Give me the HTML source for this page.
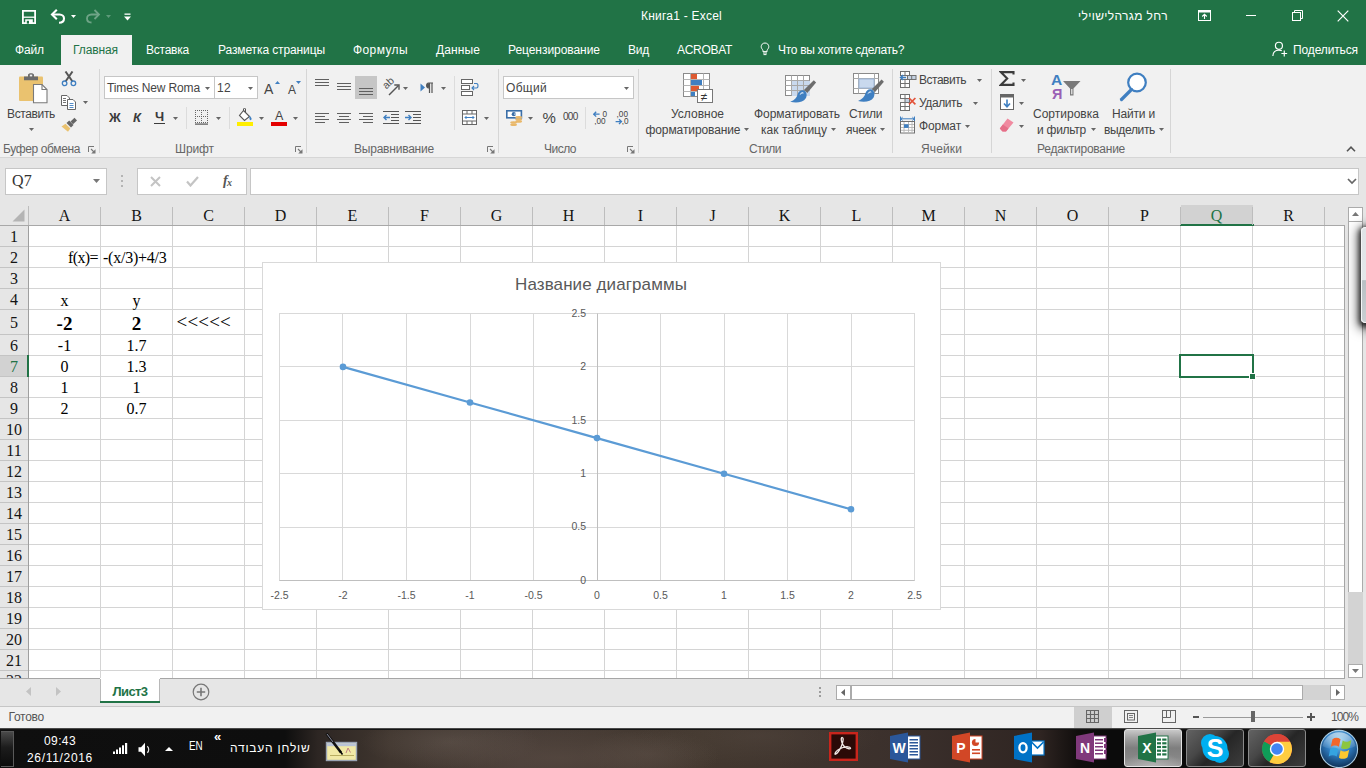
<!DOCTYPE html>
<html lang="ru"><head><meta charset="utf-8"><title>Книга1 - Excel</title>
<style>
html,body{margin:0;padding:0;}
body{width:1366px;height:768px;overflow:hidden;position:relative;background:#fff;font-family:"Liberation Sans","DejaVu Sans",sans-serif;}
.b{position:absolute;display:block;}
.t{position:absolute;white-space:nowrap;}
</style></head><body>
<div class="b" style="left:0px;top:0px;width:1366px;height:65px;background:#217346;"></div>
<div class="b" style="left:0px;top:65px;width:1366px;height:93px;background:#f1f1f1;"></div>
<div class="b" style="left:0px;top:157px;width:1366px;height:1px;background:#d6d6d6;"></div>
<div class="b" style="left:0px;top:158px;width:1366px;height:47px;background:#e6e6e6;"></div>
<svg class="b" style="left:22px;top:10px;" width="14" height="14" viewBox="0 0 14 14"><path d="M0.9 0.9H13.1V13.1H0.9Z" fill="none" stroke="#fff" stroke-width="1.8"/><path d="M1 7.2H13" stroke="#fff" stroke-width="1.3"/><path d="M3.2 9.3H10.8V13.5H3.2Z" fill="#fff"/><rect x="4.8" y="10.8" width="2.2" height="2.8" fill="#217346"/></svg>
<svg class="b" style="left:50px;top:9px;" width="16" height="15" viewBox="0 0 16 15"><path d="M2.5 5.5H9.5C12.5 5.5 14 7.5 14 9.5C14 12 12 13.7 9 13.7" fill="none" stroke="#fff" stroke-width="2.1"/><path d="M6.8 0.8L2 5.5L6.8 10.2" fill="none" stroke="#fff" stroke-width="2.1"/></svg>
<svg class="b" style="left:71.0px;top:15.0px;" width="5" height="3" viewBox="0 0 5 3"><path d="M0 0H5L2.5 3Z" fill="#fff"/></svg>
<svg class="b" style="left:85px;top:9px;" width="16" height="15" viewBox="0 0 16 15"><g opacity="0.35"><path d="M14 5.5H6.5C3.5 5.5 2 7.5 2 9.5C2 12 4 13.5 6.5 13.5" fill="none" stroke="#fff" stroke-width="1.8"/><path d="M9.5 1L14 5.5L9.5 10" fill="none" stroke="#fff" stroke-width="1.8"/></g></svg>
<svg class="b" style="left:106.0px;top:15.0px;" width="5" height="3" viewBox="0 0 5 3"><path d="M0 0H5L2.5 3Z" fill="#5e9a7a"/></svg>
<svg class="b" style="left:124px;top:13px;" width="7" height="8" viewBox="0 0 7 8"><rect x="0.5" y="0.5" width="6" height="1.3" fill="#fff"/><path d="M0 3.5H7L3.5 7.5Z" fill="#fff"/></svg>
<div class="t " style="left:641.0px;top:6.5px;font-size:12px;line-height:18px;color:#fff;letter-spacing:0.23px;">Книга1 - Excel</div>
<div class="t " style="left:1078.0px;top:6.5px;font-size:12px;line-height:18px;color:#fff;letter-spacing:0.36px;">רחל מגרהלישוילי</div>
<svg class="b" style="left:1198px;top:10px;" width="13" height="11" viewBox="0 0 13 11"><rect x="0.5" y="0.5" width="12" height="10" fill="none" stroke="#fff"/><rect x="0.5" y="0.5" width="12" height="2" fill="#fff"/><path d="M6.5 4.5V9M4.2 6.5L6.5 4.3L8.8 6.5" fill="none" stroke="#fff" stroke-width="1.1"/></svg>
<div class="b" style="left:1246px;top:15px;width:10px;height:1px;background:#fff;"></div>
<svg class="b" style="left:1292px;top:10px;" width="11" height="11" viewBox="0 0 11 11"><rect x="0.5" y="2.5" width="8" height="8" fill="none" stroke="#fff"/><path d="M2.5 2.5V0.5H10.5V8.5H8.5" fill="none" stroke="#fff"/></svg>
<svg class="b" style="left:1337px;top:10px;" width="12" height="12" viewBox="0 0 12 12"><path d="M0.7 0.7L11.3 11.3M11.3 0.7L0.7 11.3" stroke="#fff" stroke-width="1.2"/></svg>
<div class="b" style="left:61px;top:35px;width:71px;height:30px;background:#f1f1f1;"></div>
<div class="t " style="left:15.0px;top:40.5px;font-size:12px;line-height:18px;color:#fff;letter-spacing:-0.13px;">Файл</div>
<div class="t " style="left:146.0px;top:40.5px;font-size:12px;line-height:18px;color:#fff;letter-spacing:-0.23px;">Вставка</div>
<div class="t " style="left:218.0px;top:40.5px;font-size:12px;line-height:18px;color:#fff;letter-spacing:-0.11px;">Разметка страницы</div>
<div class="t " style="left:353.0px;top:40.5px;font-size:12px;line-height:18px;color:#fff;letter-spacing:0.40px;">Формулы</div>
<div class="t " style="left:436.0px;top:40.5px;font-size:12px;line-height:18px;color:#fff;letter-spacing:0.11px;">Данные</div>
<div class="t " style="left:508.0px;top:40.5px;font-size:12px;line-height:18px;color:#fff;letter-spacing:-0.05px;">Рецензирование</div>
<div class="t " style="left:628.0px;top:40.5px;font-size:12px;line-height:18px;color:#fff;letter-spacing:-0.24px;">Вид</div>
<div class="t " style="left:677.0px;top:40.5px;font-size:12px;line-height:18px;color:#fff;letter-spacing:-0.30px;">ACROBAT</div>
<div class="t " style="left:778.0px;top:40.5px;font-size:12px;line-height:18px;color:#fff;letter-spacing:-0.30px;">Что вы хотите сделать?</div>
<div class="t " style="left:1293.0px;top:40.5px;font-size:12px;line-height:18px;color:#fff;letter-spacing:-0.13px;">Поделиться</div>
<div class="t " style="left:73.0px;top:40.5px;font-size:12px;line-height:18px;color:#217346;letter-spacing:-0.10px;">Главная</div>
<svg class="b" style="left:760px;top:42px;" width="10" height="14" viewBox="0 0 10 14"><path d="M5 1C2.6 1 1.2 2.8 1.2 4.7C1.2 6.3 2.3 7.1 2.9 8.2V9.6H7.1V8.2C7.7 7.1 8.8 6.3 8.8 4.7C8.8 2.8 7.4 1 5 1Z" fill="none" stroke="#fff" stroke-width="1"/><path d="M3 11H7M3.5 12.6H6.5" stroke="#fff" stroke-width="1"/></svg>
<svg class="b" style="left:1271.5px;top:41px;" width="16" height="16" viewBox="0 0 15 15"><circle cx="6.5" cy="4.5" r="3.3" fill="none" stroke="#fff" stroke-width="1.1"/><path d="M0.8 14C0.8 10.5 3 8.6 6.5 8.6C7.6 8.6 8.5 8.8 9.2 9.1" fill="none" stroke="#fff" stroke-width="1.1"/><path d="M11.5 9V14.5M8.8 11.7H14.2" stroke="#fff" stroke-width="1.1"/></svg>
<div class="t " style="left:3.0px;top:140.0px;font-size:12px;line-height:18px;color:#666666;letter-spacing:-0.38px;">Буфер обмена</div>
<div class="t " style="left:175.0px;top:140.0px;font-size:12px;line-height:18px;color:#666666;letter-spacing:-0.10px;">Шрифт</div>
<div class="t " style="left:354.0px;top:140.0px;font-size:12px;line-height:18px;color:#666666;letter-spacing:-0.22px;">Выравнивание</div>
<div class="t " style="left:544.0px;top:140.0px;font-size:12px;line-height:18px;color:#666666;letter-spacing:-0.50px;">Число</div>
<div class="t " style="left:749.0px;top:140.0px;font-size:12px;line-height:18px;color:#666666;letter-spacing:-0.51px;">Стили</div>
<div class="t " style="left:921.0px;top:140.0px;font-size:12px;line-height:18px;color:#666666;letter-spacing:0.13px;">Ячейки</div>
<div class="t " style="left:1037.0px;top:140.0px;font-size:12px;line-height:18px;color:#666666;letter-spacing:-0.24px;">Редактирование</div>
<div class="b" style="left:99px;top:69px;width:1px;height:84px;background:#d6d6d6;"></div>
<div class="b" style="left:306px;top:69px;width:1px;height:84px;background:#d6d6d6;"></div>
<div class="b" style="left:498px;top:69px;width:1px;height:84px;background:#d6d6d6;"></div>
<div class="b" style="left:638px;top:69px;width:1px;height:84px;background:#d6d6d6;"></div>
<div class="b" style="left:892px;top:69px;width:1px;height:84px;background:#d6d6d6;"></div>
<div class="b" style="left:991px;top:69px;width:1px;height:84px;background:#d6d6d6;"></div>
<div class="b" style="left:1170px;top:69px;width:1px;height:84px;background:#d6d6d6;"></div>
<svg class="b" style="left:88px;top:146px;" width="8" height="8" viewBox="0 0 8 8"><path d="M0.5 6V0.5H6" fill="none" stroke="#777"/><path d="M7.5 3.2V7.5H3.2Z" fill="#777"/><path d="M3 3L6 6" stroke="#777" stroke-width="1.1"/></svg>
<svg class="b" style="left:295px;top:146px;" width="8" height="8" viewBox="0 0 8 8"><path d="M0.5 6V0.5H6" fill="none" stroke="#777"/><path d="M7.5 3.2V7.5H3.2Z" fill="#777"/><path d="M3 3L6 6" stroke="#777" stroke-width="1.1"/></svg>
<svg class="b" style="left:487px;top:146px;" width="8" height="8" viewBox="0 0 8 8"><path d="M0.5 6V0.5H6" fill="none" stroke="#777"/><path d="M7.5 3.2V7.5H3.2Z" fill="#777"/><path d="M3 3L6 6" stroke="#777" stroke-width="1.1"/></svg>
<svg class="b" style="left:627px;top:146px;" width="8" height="8" viewBox="0 0 8 8"><path d="M0.5 6V0.5H6" fill="none" stroke="#777"/><path d="M7.5 3.2V7.5H3.2Z" fill="#777"/><path d="M3 3L6 6" stroke="#777" stroke-width="1.1"/></svg>
<svg class="b" style="left:1346px;top:146px;" width="10" height="6" viewBox="0 0 10 6"><path d="M1 5.2L5 1.2L9 5.2" fill="none" stroke="#555" stroke-width="1.6"/></svg>
<svg class="b" style="left:19px;top:73px;" width="29" height="31" viewBox="0 0 29 31"><rect x="0" y="3.5" width="24" height="24.5" rx="1" fill="#eac26f"/><path d="M5 7.2V3.6H9V1.8C9 -0.4 15 -0.4 15 1.8V3.6H19V7.2Z" fill="#6b6b6b"/><rect x="10.8" y="1.6" width="2.4" height="1.8" fill="#f1f1f1"/><path d="M14.5 11.5H23L28 16.5V29.8H14.5Z" fill="#fff" stroke="#7a7a7a" stroke-width="1.1"/><path d="M23 11.5V16.5H28" fill="none" stroke="#7a7a7a" stroke-width="1.1"/></svg>
<div class="t " style="left:7.0px;top:105.0px;font-size:12px;line-height:18px;color:#444444;letter-spacing:-0.36px;">Вставить</div>
<svg class="b" style="left:29.0px;top:127.5px;" width="5" height="3" viewBox="0 0 5 3"><path d="M0 0H5L2.5 3Z" fill="#666"/></svg>
<svg class="b" style="left:61px;top:71px;" width="16" height="16" viewBox="0 0 16 16"><path d="M4.5 0.5L11.5 10.5M11.5 0.5L4.5 10.5" stroke="#555" stroke-width="2" fill="none"/><circle cx="3.6" cy="12.3" r="2.3" fill="none" stroke="#3f7fc1" stroke-width="1.3"/><circle cx="12.4" cy="12.3" r="2.3" fill="none" stroke="#3f7fc1" stroke-width="1.3"/></svg>
<svg class="b" style="left:61px;top:95px;" width="16" height="16" viewBox="0 0 16 16"><path d="M0.5 0.5H6L8.5 3V10.5H0.5Z" fill="#fff" stroke="#666"/><path d="M6.5 4.5H12L14.5 7V14.5H6.5Z" fill="#fff" stroke="#666"/><path d="M2 3.5H5M2 5.5H5M2 7.5H5" stroke="#666" stroke-width="0.9"/><path d="M8.5 8.5H12.5M8.5 10.5H12.5M8.5 12.5H12.5" stroke="#3f7fc1" stroke-width="0.9"/></svg>
<svg class="b" style="left:83.0px;top:101.0px;" width="5" height="3" viewBox="0 0 5 3"><path d="M0 0H5L2.5 3Z" fill="#666"/></svg>
<svg class="b" style="left:61px;top:117px;" width="17" height="16" viewBox="0 0 17 16"><path d="M9.5 4.5L13.5 0.8L16 3.4L12 7.2Z" fill="#666"/><path d="M5.5 6L8.2 3.6L12.5 8L10 10.4Z" fill="#666"/><path d="M4.5 6.8L9.3 11.6L7 14.8L0.5 9.5Z" fill="#eac26f"/></svg>
<div class="b" style="left:104px;top:76px;width:111px;height:23px;background:#fff;border:1px solid #c6c6c6;box-sizing:border-box;"></div>
<div class="t " style="left:107.0px;top:79.0px;font-size:12px;line-height:18px;color:#444444;letter-spacing:-0.14px;">Times New Roma</div>
<svg class="b" style="left:205.0px;top:86.5px;" width="5" height="3" viewBox="0 0 5 3"><path d="M0 0H5L2.5 3Z" fill="#666"/></svg>
<div class="b" style="left:214px;top:76px;width:44px;height:23px;background:#fff;border:1px solid #c6c6c6;box-sizing:border-box;"></div>
<div class="t " style="left:217.0px;top:79.0px;font-size:12px;line-height:18px;color:#444444;letter-spacing:0.33px;">12</div>
<svg class="b" style="left:248.0px;top:86.5px;" width="5" height="3" viewBox="0 0 5 3"><path d="M0 0H5L2.5 3Z" fill="#666"/></svg>
<div class="t " style="left:264.0px;top:78.5px;font-size:14px;line-height:20px;color:#444444;letter-spacing:0.66px;">A</div>
<svg class="b" style="left:274.5px;top:80.5px;" width="5" height="3" viewBox="0 0 5 3"><path d="M0 3L2.5 0L5 3Z" fill="#3f7fc1"/></svg>
<div class="t " style="left:288.0px;top:80.5px;font-size:12px;line-height:18px;color:#444444;letter-spacing:-0.00px;">A</div>
<svg class="b" style="left:295.5px;top:80.5px;" width="5" height="3" viewBox="0 0 5 3"><path d="M0 0H5L2.5 3Z" fill="#3f7fc1"/></svg>
<div class="t " style="left:109.0px;top:107.5px;font-size:13px;line-height:19px;color:#3b3b3b;letter-spacing:0.25px;font-weight:bold;">Ж</div>
<div class="t " style="left:133.0px;top:107.5px;font-size:13px;line-height:19px;color:#3b3b3b;letter-spacing:0.01px;font-weight:bold;font-style:italic;">К</div>
<div class="t " style="left:155.0px;top:107.0px;font-size:13px;line-height:19px;color:#3b3b3b;letter-spacing:-0.13px;font-weight:bold;">Ч</div>
<div class="b" style="left:154px;top:123px;width:11px;height:1px;background:#3b3b3b;"></div>
<svg class="b" style="left:173.0px;top:116.5px;" width="5" height="3" viewBox="0 0 5 3"><path d="M0 0H5L2.5 3Z" fill="#666"/></svg>
<div class="b" style="left:186px;top:107px;width:1px;height:22px;background:#dcdcdc;"></div>
<svg class="b" style="left:195px;top:110px;" width="13" height="15" viewBox="0 0 13 15"><rect x="0" y="0" width="1" height="1" fill="#666"/><rect x="2" y="0" width="1" height="1" fill="#666"/><rect x="4" y="0" width="1" height="1" fill="#666"/><rect x="6" y="0" width="1" height="1" fill="#666"/><rect x="8" y="0" width="1" height="1" fill="#666"/><rect x="10" y="0" width="1" height="1" fill="#666"/><rect x="12" y="0" width="1" height="1" fill="#666"/><rect x="0" y="6" width="1" height="1" fill="#666"/><rect x="2" y="6" width="1" height="1" fill="#666"/><rect x="4" y="6" width="1" height="1" fill="#666"/><rect x="6" y="6" width="1" height="1" fill="#666"/><rect x="8" y="6" width="1" height="1" fill="#666"/><rect x="10" y="6" width="1" height="1" fill="#666"/><rect x="12" y="6" width="1" height="1" fill="#666"/><rect x="0" y="12" width="1" height="1" fill="#666"/><rect x="2" y="12" width="1" height="1" fill="#666"/><rect x="4" y="12" width="1" height="1" fill="#666"/><rect x="6" y="12" width="1" height="1" fill="#666"/><rect x="8" y="12" width="1" height="1" fill="#666"/><rect x="10" y="12" width="1" height="1" fill="#666"/><rect x="12" y="12" width="1" height="1" fill="#666"/><rect x="0" y="0" width="1" height="1" fill="#666"/><rect x="0" y="2" width="1" height="1" fill="#666"/><rect x="0" y="4" width="1" height="1" fill="#666"/><rect x="0" y="6" width="1" height="1" fill="#666"/><rect x="0" y="8" width="1" height="1" fill="#666"/><rect x="0" y="10" width="1" height="1" fill="#666"/><rect x="0" y="12" width="1" height="1" fill="#666"/><rect x="6" y="0" width="1" height="1" fill="#666"/><rect x="6" y="2" width="1" height="1" fill="#666"/><rect x="6" y="4" width="1" height="1" fill="#666"/><rect x="6" y="6" width="1" height="1" fill="#666"/><rect x="6" y="8" width="1" height="1" fill="#666"/><rect x="6" y="10" width="1" height="1" fill="#666"/><rect x="6" y="12" width="1" height="1" fill="#666"/><rect x="12" y="0" width="1" height="1" fill="#666"/><rect x="12" y="2" width="1" height="1" fill="#666"/><rect x="12" y="4" width="1" height="1" fill="#666"/><rect x="12" y="6" width="1" height="1" fill="#666"/><rect x="12" y="8" width="1" height="1" fill="#666"/><rect x="12" y="10" width="1" height="1" fill="#666"/><rect x="12" y="12" width="1" height="1" fill="#666"/><rect x="0" y="13.5" width="13" height="1.2" fill="#555"/></svg>
<svg class="b" style="left:216.0px;top:116.5px;" width="5" height="3" viewBox="0 0 5 3"><path d="M0 0H5L2.5 3Z" fill="#666"/></svg>
<div class="b" style="left:229px;top:107px;width:1px;height:22px;background:#dcdcdc;"></div>
<svg class="b" style="left:237px;top:108px;" width="17" height="18" viewBox="0 0 17 18"><path d="M6.5 2.5L12.5 8.5L7.5 12.5L2.5 7.5Z" fill="#fff" stroke="#555" stroke-width="1.1"/><path d="M6.5 2.5V0.8C6.5 0.2 8.5 0.2 8.5 0.8V4" fill="none" stroke="#555" stroke-width="1"/><path d="M12.5 7.5C14.5 9.5 15.3 11 14 12C12.8 12.8 12 11 12.5 7.5Z" fill="#3f7fc1"/><rect x="0" y="14" width="16" height="4" fill="#ffee00"/></svg>
<svg class="b" style="left:259.0px;top:116.5px;" width="5" height="3" viewBox="0 0 5 3"><path d="M0 0H5L2.5 3Z" fill="#666"/></svg>
<div class="t " style="left:275.0px;top:107.2px;font-size:12.5px;line-height:18.5px;color:#444;letter-spacing:0.66px;">A</div>
<div class="b" style="left:271px;top:122px;width:16px;height:4px;background:#e40000;"></div>
<svg class="b" style="left:293.0px;top:116.5px;" width="5" height="3" viewBox="0 0 5 3"><path d="M0 0H5L2.5 3Z" fill="#666"/></svg>
<div class="b" style="left:355px;top:76px;width:22px;height:23px;background:#c6c6c6;"></div>
<svg class="b" style="left:315px;top:79px;" width="14" height="9" viewBox="0 0 14 9"><rect x="0" y="0" width="14" height="1" fill="#606060"/><rect x="0" y="3" width="14" height="1" fill="#606060"/><rect x="0" y="6" width="14" height="1" fill="#606060"/></svg>
<svg class="b" style="left:337px;top:83px;" width="14" height="9" viewBox="0 0 14 9"><rect x="0" y="0" width="14" height="1" fill="#606060"/><rect x="0" y="3" width="14" height="1" fill="#606060"/><rect x="0" y="6" width="14" height="1" fill="#606060"/></svg>
<svg class="b" style="left:359px;top:88px;" width="14" height="9" viewBox="0 0 14 9"><rect x="0" y="0" width="14" height="1" fill="#606060"/><rect x="0" y="3" width="14" height="1" fill="#606060"/><rect x="0" y="6" width="14" height="1" fill="#606060"/></svg>
<svg class="b" style="left:383px;top:78px;" width="19" height="19" viewBox="0 0 19 19"><path d="M6 17L15.5 7.5" stroke="#555" stroke-width="1.4"/><path d="M11.3 7H16V11.7" fill="none" stroke="#555" stroke-width="1.4"/><text transform="translate(3.2 11.5) rotate(-42)" font-size="10.5" fill="#555" font-family="Liberation Sans,sans-serif">ab</text></svg>
<svg class="b" style="left:403.0px;top:86.5px;" width="5" height="3" viewBox="0 0 5 3"><path d="M0 0H5L2.5 3Z" fill="#666"/></svg>
<svg class="b" style="left:420px;top:82px;" width="14" height="12" viewBox="0 0 14 12"><path d="M0.5 1.5L5 5.5L0.5 9.5Z" fill="#3f7fc1"/><path d="M9.5 1V11M12 1V11M13 1H8.5C6 1 6 6 8.5 6H9.5" fill="none" stroke="#555" stroke-width="1.2"/><path d="M9.3 1.2H7.8C6.3 1.8 6.3 5.2 7.8 5.8H9.3Z" fill="#555"/></svg>
<svg class="b" style="left:441.0px;top:86.5px;" width="5" height="3" viewBox="0 0 5 3"><path d="M0 0H5L2.5 3Z" fill="#666"/></svg>
<div class="b" style="left:454px;top:76px;width:1px;height:54px;background:#dcdcdc;"></div>
<svg class="b" style="left:461px;top:79px;" width="19" height="17" viewBox="0 0 19 17"><rect x="0.5" y="0.5" width="11" height="4" fill="#fff" stroke="#666"/><rect x="0.5" y="6.5" width="8" height="4" fill="#fff" stroke="#666"/><rect x="0.5" y="12.5" width="11" height="4" fill="#fff" stroke="#666"/><path d="M13 4.5H15.5C17.5 4.5 17.5 9 15.5 9H11M13 7L11 9L13 11" fill="none" stroke="#3f7fc1" stroke-width="1.1"/></svg>
<svg class="b" style="left:315px;top:113px;" width="14" height="12" viewBox="0 0 14 12"><rect x="0" y="0" width="14" height="1" fill="#606060"/><rect x="0" y="3" width="10" height="1" fill="#606060"/><rect x="0" y="6" width="14" height="1" fill="#606060"/><rect x="0" y="9" width="10" height="1" fill="#606060"/></svg>
<svg class="b" style="left:337px;top:113px;" width="14" height="12" viewBox="0 0 14 12"><rect x="0.0" y="0" width="14" height="1" fill="#606060"/><rect x="2.0" y="3" width="10" height="1" fill="#606060"/><rect x="0.0" y="6" width="14" height="1" fill="#606060"/><rect x="2.0" y="9" width="10" height="1" fill="#606060"/></svg>
<svg class="b" style="left:359px;top:113px;" width="14" height="12" viewBox="0 0 14 12"><rect x="0" y="0" width="14" height="1" fill="#606060"/><rect x="4" y="3" width="10" height="1" fill="#606060"/><rect x="0" y="6" width="14" height="1" fill="#606060"/><rect x="4" y="9" width="10" height="1" fill="#606060"/></svg>
<svg class="b" style="left:383px;top:111px;" width="16" height="14" viewBox="0 0 16 14"><path d="M0 0.5H16M8 3.5H16M8 6.5H16M8 9.5H16M0 12.5H16" stroke="#555"/><path d="M7 6.5H1M3.5 4L1 6.5L3.5 9" fill="none" stroke="#3f7fc1" stroke-width="1.4"/></svg>
<svg class="b" style="left:405px;top:111px;" width="16" height="14" viewBox="0 0 16 14"><path d="M0 0.5H16M8 3.5H16M8 6.5H16M8 9.5H16M0 12.5H16" stroke="#555"/><path d="M0 6.5H6M3.5 4L6 6.5L3.5 9" fill="none" stroke="#3f7fc1" stroke-width="1.4"/></svg>
<svg class="b" style="left:462px;top:110px;" width="15" height="15" viewBox="0 0 15 15"><rect x="0.5" y="0.5" width="14" height="14" fill="#fff" stroke="#666"/><path d="M0.5 4H14.5M0.5 11H14.5M5 0.5V4M10 0.5V4M5 11V14.5M10 11V14.5" stroke="#666"/><path d="M3 7.5H12M4.5 6L3 7.5L4.5 9M10.5 6L12 7.5L10.5 9" fill="none" stroke="#3f7fc1" stroke-width="1"/></svg>
<svg class="b" style="left:484.0px;top:116.5px;" width="5" height="3" viewBox="0 0 5 3"><path d="M0 0H5L2.5 3Z" fill="#666"/></svg>
<div class="b" style="left:503px;top:76px;width:131px;height:23px;background:#fff;border:1px solid #c6c6c6;box-sizing:border-box;"></div>
<div class="t " style="left:506.0px;top:79.0px;font-size:12px;line-height:18px;color:#444444;letter-spacing:0.30px;">Общий</div>
<svg class="b" style="left:624.0px;top:86.5px;" width="5" height="3" viewBox="0 0 5 3"><path d="M0 0H5L2.5 3Z" fill="#666"/></svg>
<svg class="b" style="left:506px;top:110px;" width="17" height="17" viewBox="0 0 17 17"><rect x="0.8" y="0.8" width="14.6" height="7" fill="#fff" stroke="#3b6fa8" stroke-width="1.6"/><circle cx="7.8" cy="4.2" r="2.1" fill="#3b6fa8"/><rect x="8.2" y="3.6" width="1.6" height="1" fill="#fff"/><ellipse cx="12.7" cy="7.2" rx="3.4" ry="1.25" fill="#e9b86a"/><ellipse cx="12.7" cy="9.4" rx="3.4" ry="1.25" fill="#e9b86a"/><ellipse cx="12.7" cy="11.4" rx="3.4" ry="1.25" fill="#e9b86a"/><ellipse cx="7.6" cy="12.6" rx="3.4" ry="1.25" fill="#e9b86a"/><ellipse cx="7.6" cy="14.8" rx="3.4" ry="1.25" fill="#e9b86a"/></svg>
<svg class="b" style="left:528.0px;top:116.5px;" width="5" height="3" viewBox="0 0 5 3"><path d="M0 0H5L2.5 3Z" fill="#666"/></svg>
<div class="t " style="left:542.5px;top:106.5px;font-size:15px;line-height:21px;color:#444;letter-spacing:-0.84px;">%</div>
<div class="t " style="left:563.0px;top:109.3px;font-size:10px;line-height:16px;color:#444;letter-spacing:-0.73px;">000</div>
<div class="b" style="left:585px;top:107px;width:1px;height:22px;background:#dcdcdc;"></div>
<svg class="b" style="left:593px;top:110px;" width="15" height="15" viewBox="0 0 15 15"><path d="M6.6 4.2H0.8M3.2 1.8L0.7 4.2L3.2 6.6" fill="none" stroke="#3f7fc1" stroke-width="1.3"/><text x="9.6" y="7" font-family="Liberation Sans,sans-serif" font-size="8.2" fill="#444">0</text><text x="1.2" y="13.6" font-family="Liberation Sans,sans-serif" font-size="8.2" fill="#444">,00</text></svg>
<svg class="b" style="left:615px;top:110px;" width="15" height="15" viewBox="0 0 15 15"><text x="1.6" y="7" font-family="Liberation Sans,sans-serif" font-size="8.2" fill="#444">,00</text><path d="M0.6 11.6H6.4M4 9.2L6.5 11.6L4 14" fill="none" stroke="#3f7fc1" stroke-width="1.3"/><text x="6.8" y="13.6" font-family="Liberation Sans,sans-serif" font-size="8.2" fill="#444">,0</text></svg>
<svg class="b" style="left:683px;top:73px;" width="31" height="31" viewBox="0 0 31 31"><rect x="0.5" y="0.5" width="26" height="23" fill="#fff" stroke="#8a8a8a"/><path d="M0.5 6.5H26.5M0.5 12.5H26.5M0.5 18.5H26.5M7.5 0.5V23.5M20.5 0.5V23.5" stroke="#b5b5b5"/><rect x="8" y="1" width="6" height="5" fill="#dd5a32"/><rect x="8" y="7" width="11" height="5" fill="#3f7fc1"/><rect x="8" y="13" width="8" height="5" fill="#dd5a32"/><rect x="8" y="19" width="4" height="4" fill="#3f7fc1"/><rect x="14.5" y="16.5" width="15" height="13" fill="#fff" stroke="#777"/><text x="17.8" y="27.5" font-size="12" fill="#333" font-family="Liberation Sans,sans-serif">≠</text></svg>
<div class="t " style="left:671.0px;top:105.0px;font-size:12px;line-height:18px;color:#444444;letter-spacing:0.00px;">Условное</div>
<div class="t " style="left:645.5px;top:121.0px;font-size:12px;line-height:18px;color:#444444;letter-spacing:-0.10px;">форматирование</div>
<svg class="b" style="left:744.0px;top:128.0px;" width="5" height="3" viewBox="0 0 5 3"><path d="M0 0H5L2.5 3Z" fill="#666"/></svg>
<svg class="b" style="left:785px;top:74px;" width="33" height="31" viewBox="0 0 33 31"><rect x="0.5" y="1.5" width="24" height="20" fill="#fff" stroke="#8a8a8a"/><rect x="7" y="7" width="18" height="15" fill="#c9d9ee"/><path d="M0.5 6.5H24.5M0.5 11.5H24.5M0.5 16.5H24.5M6.5 1.5V21.5M12.5 1.5V21.5M18.5 1.5V21.5" stroke="#a8a8a8"/><path d="M28.8 6.2l2.3 2.3l-8.8 10.4l-3.4 -2.9Z" fill="#6d6d6d"/><path d="M19.2 16.4c-3.5 -1 -5.8 1 -6.6 4c-0.9 3 -3 5.6 -7.4 7.4c6 1.6 13 0.8 15.6 -3.6c1.6 -3 1 -6.2 -1.6 -7.8Z" fill="#3f7fc1"/><path d="M18.0 18.0c-2 0.2 -3 1.6 -3.4 3.2c1.4 -1.4 2.6 -1.8 4.2 -1.8Z" fill="#cfe0f3"/></svg>
<div class="t " style="left:754.0px;top:105.0px;font-size:12px;line-height:18px;color:#444444;letter-spacing:-0.08px;">Форматировать</div>
<div class="t " style="left:761.0px;top:121.0px;font-size:12px;line-height:18px;color:#444444;letter-spacing:0.03px;">как таблицу</div>
<svg class="b" style="left:831.0px;top:128.0px;" width="5" height="3" viewBox="0 0 5 3"><path d="M0 0H5L2.5 3Z" fill="#666"/></svg>
<svg class="b" style="left:852px;top:73px;" width="33" height="31" viewBox="0 0 33 31"><rect x="1.5" y="0.5" width="25" height="20" fill="#fff" stroke="#8a8a8a"/><path d="M1.5 5.5H26.5M1.5 15.5H26.5M6.5 0.5V20.5M22.5 0.5V20.5" stroke="#a8a8a8"/><rect x="7" y="6" width="15" height="9" fill="#c9d9ee" stroke="#9db7da"/><path d="M29.6 6.4l2.3 2.3l-8.8 10.4l-3.4 -2.9Z" fill="#6d6d6d"/><path d="M20.0 16.6c-3.5 -1 -5.8 1 -6.6 4c-0.9 3 -3 5.6 -7.4 7.4c6 1.6 13 0.8 15.6 -3.6c1.6 -3 1 -6.2 -1.6 -7.8Z" fill="#3f7fc1"/><path d="M18.8 18.2c-2 0.2 -3 1.6 -3.4 3.2c1.4 -1.4 2.6 -1.8 4.2 -1.8Z" fill="#cfe0f3"/></svg>
<div class="t " style="left:849.0px;top:105.0px;font-size:12px;line-height:18px;color:#444444;letter-spacing:-0.31px;">Стили</div>
<div class="t " style="left:846.0px;top:121.0px;font-size:12px;line-height:18px;color:#444444;letter-spacing:-0.27px;">ячеек</div>
<svg class="b" style="left:880.0px;top:128.0px;" width="5" height="3" viewBox="0 0 5 3"><path d="M0 0H5L2.5 3Z" fill="#666"/></svg>
<svg class="b" style="left:899px;top:70px;" width="19" height="19" viewBox="0 0 19 19"><g fill="#fff" stroke="#707070"><rect x="1.5" y="1.5" width="9" height="4"/><rect x="1.5" y="9.5" width="9" height="4"/><rect x="1.5" y="13.5" width="9" height="4"/><rect x="8.5" y="5.5" width="8.5" height="4" fill="#c5d2e2"/><path d="M6 1.5V5.5M6 9.5V17.5M12.7 5.5V9.5"/></g><path d="M7 7.5H1.8M4.2 5L1.6 7.5L4.2 10" fill="none" stroke="#3f7fc1" stroke-width="1.5"/></svg>
<div class="t " style="left:919.0px;top:71.0px;font-size:12px;line-height:18px;color:#444444;letter-spacing:-0.48px;">Вставить</div>
<svg class="b" style="left:977.0px;top:78.5px;" width="5" height="3" viewBox="0 0 5 3"><path d="M0 0H5L2.5 3Z" fill="#666"/></svg>
<svg class="b" style="left:899px;top:93px;" width="19" height="19" viewBox="0 0 19 19"><g fill="#fff" stroke="#707070"><rect x="1.5" y="1.5" width="9" height="4"/><rect x="1.5" y="9.5" width="9" height="4"/><rect x="1.5" y="13.5" width="9" height="4"/><rect x="6" y="5.5" width="4.5" height="4" fill="#c5d2e2"/><path d="M6 1.5V5.5M6 9.5V17.5"/></g><path d="M10 5L16.4 11.4M16.4 5L10 11.4" stroke="#e2533a" stroke-width="1.7"/></svg>
<div class="t " style="left:919.0px;top:94.0px;font-size:12px;line-height:18px;color:#444444;letter-spacing:-0.40px;">Удалить</div>
<svg class="b" style="left:973.0px;top:101.5px;" width="5" height="3" viewBox="0 0 5 3"><path d="M0 0H5L2.5 3Z" fill="#666"/></svg>
<svg class="b" style="left:899px;top:116px;" width="19" height="19" viewBox="0 0 19 19"><path d="M1.5 2.8H15M1.5 0.5V5M15.5 0.5V5M3.6 1.2L1.8 2.8L3.6 4.4M13.4 1.2L15.2 2.8L13.4 4.4" fill="none" stroke="#3f7fc1" stroke-width="1"/><rect x="1.5" y="5.5" width="14" height="11.5" fill="#fff" stroke="#707070"/><path d="M2 8.5H15M2 11.5H15M2 14.3H15M5 6V16.5M9.5 6V16.5M13 6V16.5" stroke="#b4b4b4" stroke-width="0.9"/><rect x="5" y="8.3" width="4.6" height="3.6" fill="#3f7fc1"/></svg>
<div class="t " style="left:919.0px;top:117.0px;font-size:12px;line-height:18px;color:#444444;letter-spacing:-0.10px;">Формат</div>
<svg class="b" style="left:965.0px;top:124.5px;" width="5" height="3" viewBox="0 0 5 3"><path d="M0 0H5L2.5 3Z" fill="#666"/></svg>
<svg class="b" style="left:999px;top:71px;" width="16" height="15" viewBox="0 0 16 15"><path d="M14.5 3.5V1.1H1.8L8.2 7.5L1.8 13.9H14.5V11.5" fill="none" stroke="#3c3c3c" stroke-width="2.1"/></svg>
<svg class="b" style="left:1021.0px;top:78.5px;" width="5" height="3" viewBox="0 0 5 3"><path d="M0 0H5L2.5 3Z" fill="#666"/></svg>
<svg class="b" style="left:1000px;top:94px;" width="15" height="16" viewBox="0 0 15 16"><rect x="0.5" y="0.5" width="13" height="15" fill="#fff" stroke="#666"/><rect x="0.5" y="0.5" width="13" height="3" fill="#666"/><path d="M7 5.5V12.5M4 9.5L7 12.8L10 9.5" fill="none" stroke="#3f7fc1" stroke-width="1.6"/></svg>
<svg class="b" style="left:1019.0px;top:101.5px;" width="5" height="3" viewBox="0 0 5 3"><path d="M0 0H5L2.5 3Z" fill="#666"/></svg>
<svg class="b" style="left:999px;top:118px;" width="16" height="14" viewBox="0 0 16 14"><path d="M8.5 0.5L14.5 4.5L7 13.5H3.5L0.8 10.5Z" fill="#f08aa0"/><path d="M0.8 10.5L3.8 6.5L9.5 10.5L7 13.5H3.5Z" fill="#e56f88"/></svg>
<svg class="b" style="left:1019.0px;top:124.5px;" width="5" height="3" viewBox="0 0 5 3"><path d="M0 0H5L2.5 3Z" fill="#666"/></svg>
<div class="t " style="left:1051.0px;top:69.0px;font-size:15.5px;line-height:21.5px;color:#3f7fc1;letter-spacing:-0.19px;font-weight:bold;">А</div>
<div class="t " style="left:1052.0px;top:83.8px;font-size:14.5px;line-height:20.5px;color:#9a5fb5;letter-spacing:-1.42px;font-weight:bold;">Я</div>
<svg class="b" style="left:1063px;top:81px;" width="18" height="15" viewBox="0 0 18 15"><path d="M0 0H17.5L10.5 7.5V14.5H7V7.5Z" fill="#7a7a7a"/><path d="M8.2 8V13.3H9.4V8Z" fill="#f1f1f1"/></svg>
<div class="t " style="left:1033.0px;top:105.0px;font-size:12px;line-height:18px;color:#444444;letter-spacing:0.01px;">Сортировка</div>
<div class="t " style="left:1037.0px;top:121.0px;font-size:12px;line-height:18px;color:#444444;letter-spacing:-0.26px;">и фильтр</div>
<svg class="b" style="left:1091.0px;top:128.0px;" width="5" height="3" viewBox="0 0 5 3"><path d="M0 0H5L2.5 3Z" fill="#666"/></svg>
<svg class="b" style="left:1119px;top:72px;" width="30" height="30" viewBox="0 0 30 30"><circle cx="18" cy="10.5" r="8.8" fill="#fff" stroke="#3f7fc1" stroke-width="2.2"/><path d="M12.5 17.5L2.5 27.5" stroke="#3f7fc1" stroke-width="3.2" stroke-linecap="round"/></svg>
<div class="t " style="left:1112.0px;top:105.0px;font-size:12px;line-height:18px;color:#444444;letter-spacing:-0.18px;">Найти и</div>
<div class="t " style="left:1104.0px;top:121.0px;font-size:12px;line-height:18px;color:#444444;letter-spacing:-0.34px;">выделить</div>
<svg class="b" style="left:1159.0px;top:128.0px;" width="5" height="3" viewBox="0 0 5 3"><path d="M0 0H5L2.5 3Z" fill="#666"/></svg>
<div class="b" style="left:5px;top:168px;width:102px;height:27px;background:#fff;border:1px solid #c6c6c6;box-sizing:border-box;"></div>
<div class="t " style="left:12.0px;top:170.0px;font-size:16px;line-height:22px;color:#333;letter-spacing:0.22px;font-family:'Liberation Serif',serif;">Q7</div>
<svg class="b" style="left:93.0px;top:179.0px;" width="7" height="4" viewBox="0 0 7 4"><path d="M0 0H7L3.5 4Z" fill="#777"/></svg>
<div class="b" style="left:121px;top:175px;width:2px;height:2px;background:#b4b4b4;"></div>
<div class="b" style="left:121px;top:180px;width:2px;height:2px;background:#b4b4b4;"></div>
<div class="b" style="left:121px;top:185px;width:2px;height:2px;background:#b4b4b4;"></div>
<div class="b" style="left:137px;top:168px;width:110px;height:27px;background:#fff;border:1px solid #c6c6c6;box-sizing:border-box;"></div>
<svg class="b" style="left:150px;top:176px;" width="11" height="11" viewBox="0 0 11 11"><path d="M1 1L10 10M10 1L1 10" stroke="#c4c4c4" stroke-width="2"/></svg>
<svg class="b" style="left:186px;top:176px;" width="13" height="11" viewBox="0 0 13 11"><path d="M1 5.5L4.5 9.5L12 1" fill="none" stroke="#c4c4c4" stroke-width="2.2"/></svg>
<div class="t " style="left:223.0px;top:170.5px;font-size:14px;line-height:20px;color:#555;letter-spacing:-0.66px;font-family:'Liberation Serif',serif;font-weight:bold;font-style:italic;">f</div>
<div class="t " style="left:227.0px;top:175.0px;font-size:10px;line-height:16px;color:#555;letter-spacing:1.00px;font-family:'Liberation Serif',serif;font-weight:bold;font-style:italic;">x</div>
<div class="b" style="left:250px;top:168px;width:1109px;height:27px;background:#fff;border:1px solid #c6c6c6;box-sizing:border-box;"></div>
<svg class="b" style="left:1347px;top:178px;" width="10" height="7" viewBox="0 0 10 7"><path d="M1 1L5 5L9 1" fill="none" stroke="#666" stroke-width="1.7"/></svg>
<div class="b" style="left:0px;top:205px;width:1366px;height:473px;background:#fff;"></div>
<div class="b" style="left:0px;top:205px;width:1345px;height:20px;background:#e6e6e6;"></div>
<div class="b" style="left:0px;top:225px;width:1345px;height:1px;background:#a8a8a8;"></div>
<div class="b" style="left:0px;top:226px;width:28px;height:452px;background:#e6e6e6;"></div>
<div class="b" style="left:28px;top:226px;width:1px;height:452px;background:#9f9f9f;"></div>
<div class="b" style="left:28px;top:206px;width:1px;height:19px;background:#bdbdbd;"></div>
<svg class="b" style="left:12px;top:209px;" width="13" height="13" viewBox="0 0 13 13"><path d="M12.5 0.5V12.5H0.5Z" fill="#b4b4b4"/></svg>
<div class="b" style="left:1181px;top:205px;width:72px;height:20px;background:#d2d2d2;"></div>
<div class="b" style="left:1180px;top:224px;width:74px;height:2px;background:#217346;"></div>
<div class="t " style="left:58.7px;top:204.5px;font-size:16px;line-height:22px;color:#141414;letter-spacing:0.00px;font-family:'Liberation Serif',serif;">A</div>
<div class="t " style="left:131.2px;top:204.5px;font-size:16px;line-height:22px;color:#141414;letter-spacing:0.00px;font-family:'Liberation Serif',serif;">B</div>
<div class="t " style="left:203.2px;top:204.5px;font-size:16px;line-height:22px;color:#141414;letter-spacing:0.00px;font-family:'Liberation Serif',serif;">C</div>
<div class="t " style="left:274.7px;top:204.5px;font-size:16px;line-height:22px;color:#141414;letter-spacing:0.00px;font-family:'Liberation Serif',serif;">D</div>
<div class="t " style="left:347.6px;top:204.5px;font-size:16px;line-height:22px;color:#141414;letter-spacing:0.00px;font-family:'Liberation Serif',serif;">E</div>
<div class="t " style="left:420.1px;top:204.5px;font-size:16px;line-height:22px;color:#141414;letter-spacing:0.00px;font-family:'Liberation Serif',serif;">F</div>
<div class="t " style="left:490.7px;top:204.5px;font-size:16px;line-height:22px;color:#141414;letter-spacing:0.00px;font-family:'Liberation Serif',serif;">G</div>
<div class="t " style="left:562.7px;top:204.5px;font-size:16px;line-height:22px;color:#141414;letter-spacing:0.00px;font-family:'Liberation Serif',serif;">H</div>
<div class="t " style="left:637.8px;top:204.5px;font-size:16px;line-height:22px;color:#141414;letter-spacing:0.00px;font-family:'Liberation Serif',serif;">I</div>
<div class="t " style="left:709.4px;top:204.5px;font-size:16px;line-height:22px;color:#141414;letter-spacing:0.00px;font-family:'Liberation Serif',serif;">J</div>
<div class="t " style="left:778.7px;top:204.5px;font-size:16px;line-height:22px;color:#141414;letter-spacing:0.00px;font-family:'Liberation Serif',serif;">K</div>
<div class="t " style="left:851.6px;top:204.5px;font-size:16px;line-height:22px;color:#141414;letter-spacing:0.00px;font-family:'Liberation Serif',serif;">L</div>
<div class="t " style="left:921.4px;top:204.5px;font-size:16px;line-height:22px;color:#141414;letter-spacing:0.00px;font-family:'Liberation Serif',serif;">M</div>
<div class="t " style="left:994.7px;top:204.5px;font-size:16px;line-height:22px;color:#141414;letter-spacing:0.00px;font-family:'Liberation Serif',serif;">N</div>
<div class="t " style="left:1066.7px;top:204.5px;font-size:16px;line-height:22px;color:#141414;letter-spacing:0.00px;font-family:'Liberation Serif',serif;">O</div>
<div class="t " style="left:1140.1px;top:204.5px;font-size:16px;line-height:22px;color:#141414;letter-spacing:0.00px;font-family:'Liberation Serif',serif;">P</div>
<div class="t " style="left:1210.7px;top:204.5px;font-size:16px;line-height:22px;color:#217346;letter-spacing:0.00px;font-family:'Liberation Serif',serif;">Q</div>
<div class="t " style="left:1283.2px;top:204.5px;font-size:16px;line-height:22px;color:#141414;letter-spacing:0.00px;font-family:'Liberation Serif',serif;">R</div>
<div class="b" style="left:100px;top:207px;width:1px;height:18px;background:#bdbdbd;"></div>
<div class="b" style="left:172px;top:207px;width:1px;height:18px;background:#bdbdbd;"></div>
<div class="b" style="left:244px;top:207px;width:1px;height:18px;background:#bdbdbd;"></div>
<div class="b" style="left:316px;top:207px;width:1px;height:18px;background:#bdbdbd;"></div>
<div class="b" style="left:388px;top:207px;width:1px;height:18px;background:#bdbdbd;"></div>
<div class="b" style="left:460px;top:207px;width:1px;height:18px;background:#bdbdbd;"></div>
<div class="b" style="left:532px;top:207px;width:1px;height:18px;background:#bdbdbd;"></div>
<div class="b" style="left:604px;top:207px;width:1px;height:18px;background:#bdbdbd;"></div>
<div class="b" style="left:676px;top:207px;width:1px;height:18px;background:#bdbdbd;"></div>
<div class="b" style="left:748px;top:207px;width:1px;height:18px;background:#bdbdbd;"></div>
<div class="b" style="left:820px;top:207px;width:1px;height:18px;background:#bdbdbd;"></div>
<div class="b" style="left:892px;top:207px;width:1px;height:18px;background:#bdbdbd;"></div>
<div class="b" style="left:964px;top:207px;width:1px;height:18px;background:#bdbdbd;"></div>
<div class="b" style="left:1036px;top:207px;width:1px;height:18px;background:#bdbdbd;"></div>
<div class="b" style="left:1108px;top:207px;width:1px;height:18px;background:#bdbdbd;"></div>
<div class="b" style="left:1180px;top:207px;width:1px;height:18px;background:#bdbdbd;"></div>
<div class="b" style="left:1252px;top:207px;width:1px;height:18px;background:#bdbdbd;"></div>
<div class="b" style="left:1324px;top:207px;width:1px;height:18px;background:#bdbdbd;"></div>
<div class="b" style="left:100px;top:226px;width:1px;height:452px;background:#d4d4d4;"></div>
<div class="b" style="left:172px;top:226px;width:1px;height:452px;background:#d4d4d4;"></div>
<div class="b" style="left:244px;top:226px;width:1px;height:452px;background:#d4d4d4;"></div>
<div class="b" style="left:316px;top:226px;width:1px;height:452px;background:#d4d4d4;"></div>
<div class="b" style="left:388px;top:226px;width:1px;height:452px;background:#d4d4d4;"></div>
<div class="b" style="left:460px;top:226px;width:1px;height:452px;background:#d4d4d4;"></div>
<div class="b" style="left:532px;top:226px;width:1px;height:452px;background:#d4d4d4;"></div>
<div class="b" style="left:604px;top:226px;width:1px;height:452px;background:#d4d4d4;"></div>
<div class="b" style="left:676px;top:226px;width:1px;height:452px;background:#d4d4d4;"></div>
<div class="b" style="left:748px;top:226px;width:1px;height:452px;background:#d4d4d4;"></div>
<div class="b" style="left:820px;top:226px;width:1px;height:452px;background:#d4d4d4;"></div>
<div class="b" style="left:892px;top:226px;width:1px;height:452px;background:#d4d4d4;"></div>
<div class="b" style="left:964px;top:226px;width:1px;height:452px;background:#d4d4d4;"></div>
<div class="b" style="left:1036px;top:226px;width:1px;height:452px;background:#d4d4d4;"></div>
<div class="b" style="left:1108px;top:226px;width:1px;height:452px;background:#d4d4d4;"></div>
<div class="b" style="left:1180px;top:226px;width:1px;height:452px;background:#d4d4d4;"></div>
<div class="b" style="left:1252px;top:226px;width:1px;height:452px;background:#d4d4d4;"></div>
<div class="b" style="left:1324px;top:226px;width:1px;height:452px;background:#d4d4d4;"></div>
<div class="b" style="left:29px;top:246px;width:1316px;height:1px;background:#d4d4d4;"></div>
<div class="b" style="left:0px;top:246px;width:28px;height:1px;background:#c4c4c4;"></div>
<div class="b" style="left:29px;top:267px;width:1316px;height:1px;background:#d4d4d4;"></div>
<div class="b" style="left:0px;top:267px;width:28px;height:1px;background:#c4c4c4;"></div>
<div class="b" style="left:29px;top:288px;width:1316px;height:1px;background:#d4d4d4;"></div>
<div class="b" style="left:0px;top:288px;width:28px;height:1px;background:#c4c4c4;"></div>
<div class="b" style="left:29px;top:309px;width:1316px;height:1px;background:#d4d4d4;"></div>
<div class="b" style="left:0px;top:309px;width:28px;height:1px;background:#c4c4c4;"></div>
<div class="b" style="left:29px;top:334px;width:1316px;height:1px;background:#d4d4d4;"></div>
<div class="b" style="left:0px;top:334px;width:28px;height:1px;background:#c4c4c4;"></div>
<div class="b" style="left:29px;top:355px;width:1316px;height:1px;background:#d4d4d4;"></div>
<div class="b" style="left:0px;top:355px;width:28px;height:1px;background:#c4c4c4;"></div>
<div class="b" style="left:29px;top:376px;width:1316px;height:1px;background:#d4d4d4;"></div>
<div class="b" style="left:0px;top:376px;width:28px;height:1px;background:#c4c4c4;"></div>
<div class="b" style="left:29px;top:397px;width:1316px;height:1px;background:#d4d4d4;"></div>
<div class="b" style="left:0px;top:397px;width:28px;height:1px;background:#c4c4c4;"></div>
<div class="b" style="left:29px;top:418px;width:1316px;height:1px;background:#d4d4d4;"></div>
<div class="b" style="left:0px;top:418px;width:28px;height:1px;background:#c4c4c4;"></div>
<div class="b" style="left:29px;top:439px;width:1316px;height:1px;background:#d4d4d4;"></div>
<div class="b" style="left:0px;top:439px;width:28px;height:1px;background:#c4c4c4;"></div>
<div class="b" style="left:29px;top:460px;width:1316px;height:1px;background:#d4d4d4;"></div>
<div class="b" style="left:0px;top:460px;width:28px;height:1px;background:#c4c4c4;"></div>
<div class="b" style="left:29px;top:481px;width:1316px;height:1px;background:#d4d4d4;"></div>
<div class="b" style="left:0px;top:481px;width:28px;height:1px;background:#c4c4c4;"></div>
<div class="b" style="left:29px;top:502px;width:1316px;height:1px;background:#d4d4d4;"></div>
<div class="b" style="left:0px;top:502px;width:28px;height:1px;background:#c4c4c4;"></div>
<div class="b" style="left:29px;top:523px;width:1316px;height:1px;background:#d4d4d4;"></div>
<div class="b" style="left:0px;top:523px;width:28px;height:1px;background:#c4c4c4;"></div>
<div class="b" style="left:29px;top:544px;width:1316px;height:1px;background:#d4d4d4;"></div>
<div class="b" style="left:0px;top:544px;width:28px;height:1px;background:#c4c4c4;"></div>
<div class="b" style="left:29px;top:565px;width:1316px;height:1px;background:#d4d4d4;"></div>
<div class="b" style="left:0px;top:565px;width:28px;height:1px;background:#c4c4c4;"></div>
<div class="b" style="left:29px;top:586px;width:1316px;height:1px;background:#d4d4d4;"></div>
<div class="b" style="left:0px;top:586px;width:28px;height:1px;background:#c4c4c4;"></div>
<div class="b" style="left:29px;top:607px;width:1316px;height:1px;background:#d4d4d4;"></div>
<div class="b" style="left:0px;top:607px;width:28px;height:1px;background:#c4c4c4;"></div>
<div class="b" style="left:29px;top:628px;width:1316px;height:1px;background:#d4d4d4;"></div>
<div class="b" style="left:0px;top:628px;width:28px;height:1px;background:#c4c4c4;"></div>
<div class="b" style="left:29px;top:649px;width:1316px;height:1px;background:#d4d4d4;"></div>
<div class="b" style="left:0px;top:649px;width:28px;height:1px;background:#c4c4c4;"></div>
<div class="b" style="left:29px;top:670px;width:1316px;height:1px;background:#d4d4d4;"></div>
<div class="b" style="left:0px;top:670px;width:28px;height:1px;background:#c4c4c4;"></div>
<div class="b" style="left:0px;top:356px;width:27px;height:20px;background:#d2d2d2;"></div>
<div class="b" style="left:27px;top:355px;width:2px;height:22px;background:#217346;"></div>
<div class="t " style="left:10.0px;top:225.5px;font-size:16px;line-height:22px;color:#141414;letter-spacing:0.00px;font-family:'Liberation Serif',serif;">1</div>
<div class="t " style="left:10.0px;top:246.5px;font-size:16px;line-height:22px;color:#141414;letter-spacing:0.00px;font-family:'Liberation Serif',serif;">2</div>
<div class="t " style="left:10.0px;top:267.5px;font-size:16px;line-height:22px;color:#141414;letter-spacing:0.00px;font-family:'Liberation Serif',serif;">3</div>
<div class="t " style="left:10.0px;top:288.5px;font-size:16px;line-height:22px;color:#141414;letter-spacing:0.00px;font-family:'Liberation Serif',serif;">4</div>
<div class="t " style="left:10.0px;top:311.5px;font-size:16px;line-height:22px;color:#141414;letter-spacing:0.00px;font-family:'Liberation Serif',serif;">5</div>
<div class="t " style="left:10.0px;top:334.5px;font-size:16px;line-height:22px;color:#141414;letter-spacing:0.00px;font-family:'Liberation Serif',serif;">6</div>
<div class="t " style="left:10.0px;top:355.5px;font-size:16px;line-height:22px;color:#217346;letter-spacing:0.00px;font-family:'Liberation Serif',serif;">7</div>
<div class="t " style="left:10.0px;top:376.5px;font-size:16px;line-height:22px;color:#141414;letter-spacing:0.00px;font-family:'Liberation Serif',serif;">8</div>
<div class="t " style="left:10.0px;top:397.5px;font-size:16px;line-height:22px;color:#141414;letter-spacing:0.00px;font-family:'Liberation Serif',serif;">9</div>
<div class="t " style="left:6.0px;top:418.5px;font-size:16px;line-height:22px;color:#141414;letter-spacing:0.00px;font-family:'Liberation Serif',serif;">10</div>
<div class="t " style="left:6.3px;top:439.5px;font-size:16px;line-height:22px;color:#141414;letter-spacing:0.00px;font-family:'Liberation Serif',serif;">11</div>
<div class="t " style="left:6.0px;top:460.5px;font-size:16px;line-height:22px;color:#141414;letter-spacing:0.00px;font-family:'Liberation Serif',serif;">12</div>
<div class="t " style="left:6.0px;top:481.5px;font-size:16px;line-height:22px;color:#141414;letter-spacing:0.00px;font-family:'Liberation Serif',serif;">13</div>
<div class="t " style="left:6.0px;top:502.5px;font-size:16px;line-height:22px;color:#141414;letter-spacing:0.00px;font-family:'Liberation Serif',serif;">14</div>
<div class="t " style="left:6.0px;top:523.5px;font-size:16px;line-height:22px;color:#141414;letter-spacing:0.00px;font-family:'Liberation Serif',serif;">15</div>
<div class="t " style="left:6.0px;top:544.5px;font-size:16px;line-height:22px;color:#141414;letter-spacing:0.00px;font-family:'Liberation Serif',serif;">16</div>
<div class="t " style="left:6.0px;top:565.5px;font-size:16px;line-height:22px;color:#141414;letter-spacing:0.00px;font-family:'Liberation Serif',serif;">17</div>
<div class="t " style="left:6.0px;top:586.5px;font-size:16px;line-height:22px;color:#141414;letter-spacing:0.00px;font-family:'Liberation Serif',serif;">18</div>
<div class="t " style="left:6.0px;top:607.5px;font-size:16px;line-height:22px;color:#141414;letter-spacing:0.00px;font-family:'Liberation Serif',serif;">19</div>
<div class="t " style="left:6.0px;top:628.5px;font-size:16px;line-height:22px;color:#141414;letter-spacing:0.00px;font-family:'Liberation Serif',serif;">20</div>
<div class="t " style="left:6.0px;top:649.5px;font-size:16px;line-height:22px;color:#141414;letter-spacing:0.00px;font-family:'Liberation Serif',serif;">21</div>
<div class="b" style="left:0;top:671px;width:28px;height:7px;overflow:hidden"><div class="t" style="left:6px;top:-1px;font-family:'Liberation Serif',serif;font-size:16px;line-height:22px;color:#262626">22</div></div>
<div class="t " style="left:68.0px;top:247.0px;font-size:16px;line-height:22px;color:#000;letter-spacing:-0.60px;font-family:'Liberation Serif',serif;">f(x)=</div>
<div class="t " style="left:103.0px;top:247.0px;font-size:16px;line-height:22px;color:#000;letter-spacing:-0.24px;font-family:'Liberation Serif',serif;">-(x/3)+4/3</div>
<div class="t " style="left:60.5px;top:289.5px;font-size:16px;line-height:22px;color:#000;letter-spacing:0.00px;font-family:'Liberation Serif',serif;">x</div>
<div class="t " style="left:132.5px;top:289.5px;font-size:16px;line-height:22px;color:#000;letter-spacing:0.00px;font-family:'Liberation Serif',serif;">y</div>
<div class="t " style="left:56.6px;top:311.0px;font-size:19px;line-height:25px;color:#000;letter-spacing:0.00px;font-family:'Liberation Serif',serif;font-weight:bold;">-2</div>
<div class="t " style="left:131.8px;top:311.0px;font-size:19px;line-height:25px;color:#000;letter-spacing:0.00px;font-family:'Liberation Serif',serif;font-weight:bold;">2</div>
<div class="t " style="left:176.5px;top:309.0px;font-size:19px;line-height:25px;color:#000;letter-spacing:0.18px;font-family:'Liberation Serif',serif;">&lt;&lt;&lt;&lt;&lt;</div>
<div class="t " style="left:57.8px;top:334.8px;font-size:16px;line-height:22px;color:#000;letter-spacing:0.00px;font-family:'Liberation Serif',serif;">-1</div>
<div class="t " style="left:126.5px;top:334.8px;font-size:16px;line-height:22px;color:#000;letter-spacing:0.00px;font-family:'Liberation Serif',serif;">1.7</div>
<div class="t " style="left:60.5px;top:355.8px;font-size:16px;line-height:22px;color:#000;letter-spacing:0.00px;font-family:'Liberation Serif',serif;">0</div>
<div class="t " style="left:126.5px;top:355.8px;font-size:16px;line-height:22px;color:#000;letter-spacing:0.00px;font-family:'Liberation Serif',serif;">1.3</div>
<div class="t " style="left:60.5px;top:376.8px;font-size:16px;line-height:22px;color:#000;letter-spacing:0.00px;font-family:'Liberation Serif',serif;">1</div>
<div class="t " style="left:132.5px;top:376.8px;font-size:16px;line-height:22px;color:#000;letter-spacing:0.00px;font-family:'Liberation Serif',serif;">1</div>
<div class="t " style="left:60.5px;top:397.8px;font-size:16px;line-height:22px;color:#000;letter-spacing:0.00px;font-family:'Liberation Serif',serif;">2</div>
<div class="t " style="left:126.5px;top:397.8px;font-size:16px;line-height:22px;color:#000;letter-spacing:0.00px;font-family:'Liberation Serif',serif;">0.7</div>
<div class="b" style="left:1179px;top:354px;width:75px;height:24px;border:2px solid #217346;box-sizing:border-box;"></div>
<div class="b" style="left:1249px;top:373px;width:7px;height:7px;background:#217346;border:1px solid #fff;box-sizing:border-box;"></div>
<div class="b" style="left:262px;top:262px;width:679px;height:348px;background:#fff;border:1px solid #d9d9d9;box-sizing:border-box;"></div>
<svg class="b" style="left:262px;top:262px;" width="679" height="348" viewBox="0 0 679 348"><path d="M17.5 51.0V319.0" stroke="#d9d9d9"/><path d="M80.5 51.0V319.0" stroke="#d9d9d9"/><path d="M144.5 51.0V319.0" stroke="#d9d9d9"/><path d="M208.5 51.0V319.0" stroke="#d9d9d9"/><path d="M271.5 51.0V319.0" stroke="#d9d9d9"/><path d="M335.5 51.0V319.0" stroke="#d9d9d9"/><path d="M398.5 51.0V319.0" stroke="#d9d9d9"/><path d="M462.5 51.0V319.0" stroke="#d9d9d9"/><path d="M525.5 51.0V319.0" stroke="#d9d9d9"/><path d="M589.5 51.0V319.0" stroke="#d9d9d9"/><path d="M652.5 51.0V319.0" stroke="#d9d9d9"/><path d="M17.0 51.5H653.0" stroke="#d9d9d9"/><path d="M17.0 104.5H653.0" stroke="#d9d9d9"/><path d="M17.0 158.5H653.0" stroke="#d9d9d9"/><path d="M17.0 211.5H653.0" stroke="#d9d9d9"/><path d="M17.0 265.5H653.0" stroke="#d9d9d9"/><path d="M17.0 318.5H653.0" stroke="#d9d9d9"/><path d="M335.5 51.5V318.5" stroke="#bfbfbf"/><path d="M17.5 318.5H652.5" stroke="#bfbfbf"/><polyline fill="none" stroke="#5b9bd5" stroke-width="2.2" points="81.0,104.9 208.0,140.5 335.0,176.1 462.0,211.7 589.0,247.3"/><circle cx="81.0" cy="104.9" r="3.3" fill="#5b9bd5"/><circle cx="208.0" cy="140.5" r="3.3" fill="#5b9bd5"/><circle cx="335.0" cy="176.1" r="3.3" fill="#5b9bd5"/><circle cx="462.0" cy="211.7" r="3.3" fill="#5b9bd5"/><circle cx="589.0" cy="247.3" r="3.3" fill="#5b9bd5"/></svg>
<div class="t " style="left:515.0px;top:273.1px;font-size:17px;line-height:23px;color:#595959;letter-spacing:0.10px;">Название диаграммы</div>
<div class="t " style="left:571.4px;top:304.8px;font-size:10.5px;line-height:16.5px;color:#595959;letter-spacing:0.00px;">2.5</div>
<div class="t " style="left:580.2px;top:358.1px;font-size:10.5px;line-height:16.5px;color:#595959;letter-spacing:0.00px;">2</div>
<div class="t " style="left:571.4px;top:411.6px;font-size:10.5px;line-height:16.5px;color:#595959;letter-spacing:0.00px;">1.5</div>
<div class="t " style="left:580.2px;top:464.9px;font-size:10.5px;line-height:16.5px;color:#595959;letter-spacing:0.00px;">1</div>
<div class="t " style="left:571.4px;top:518.4px;font-size:10.5px;line-height:16.5px;color:#595959;letter-spacing:0.00px;">0.5</div>
<div class="t " style="left:580.2px;top:571.8px;font-size:10.5px;line-height:16.5px;color:#595959;letter-spacing:0.00px;">0</div>
<div class="t " style="left:270.5px;top:587.2px;font-size:10.5px;line-height:16.5px;color:#595959;letter-spacing:0.00px;">-2.5</div>
<div class="t " style="left:338.3px;top:587.2px;font-size:10.5px;line-height:16.5px;color:#595959;letter-spacing:0.00px;">-2</div>
<div class="t " style="left:397.5px;top:587.2px;font-size:10.5px;line-height:16.5px;color:#595959;letter-spacing:0.00px;">-1.5</div>
<div class="t " style="left:465.3px;top:587.2px;font-size:10.5px;line-height:16.5px;color:#595959;letter-spacing:0.00px;">-1</div>
<div class="t " style="left:524.5px;top:587.2px;font-size:10.5px;line-height:16.5px;color:#595959;letter-spacing:0.00px;">-0.5</div>
<div class="t " style="left:594.1px;top:587.2px;font-size:10.5px;line-height:16.5px;color:#595959;letter-spacing:0.00px;">0</div>
<div class="t " style="left:653.2px;top:587.2px;font-size:10.5px;line-height:16.5px;color:#595959;letter-spacing:0.00px;">0.5</div>
<div class="t " style="left:721.1px;top:587.2px;font-size:10.5px;line-height:16.5px;color:#595959;letter-spacing:0.00px;">1</div>
<div class="t " style="left:780.2px;top:587.2px;font-size:10.5px;line-height:16.5px;color:#595959;letter-spacing:0.00px;">1.5</div>
<div class="t " style="left:848.1px;top:587.2px;font-size:10.5px;line-height:16.5px;color:#595959;letter-spacing:0.00px;">2</div>
<div class="t " style="left:907.2px;top:587.2px;font-size:10.5px;line-height:16.5px;color:#595959;letter-spacing:0.00px;">2.5</div>
<div class="b" style="left:1345px;top:205px;width:21px;height:502px;background:#e6e6e6;"></div>
<div class="b" style="left:1344px;top:225px;width:1px;height:453px;background:#a6a6a6;"></div>
<div class="b" style="left:1348px;top:207px;width:15px;height:15px;background:#fff;border:1px solid #ababab;box-sizing:border-box;"></div>
<svg class="b" style="left:1352px;top:212px;" width="7" height="4" viewBox="0 0 7 4"><path d="M0 4L3.5 0L7 4Z" fill="#777"/></svg>
<div class="b" style="left:1348px;top:221px;width:15px;height:372px;background:#fff;border:1px solid #ababab;box-sizing:border-box;"></div>
<div class="b" style="left:1348px;top:592px;width:15px;height:73px;background:#d3d3d3;"></div>
<div class="b" style="left:1348px;top:664px;width:15px;height:14px;background:#fff;border:1px solid #ababab;box-sizing:border-box;"></div>
<svg class="b" style="left:1352px;top:669px;" width="7" height="4" viewBox="0 0 7 4"><path d="M0 0H7L3.5 4Z" fill="#777"/></svg>
<div class="b" style="left:1361px;top:227px;width:12px;height:94px;border-radius:4px;background:linear-gradient(#dfe3e6,#e4e8ea 55%,#b9c0c4 56%,#c9cfd2);box-shadow:0 2px 5px 2px rgba(0,0,0,0.7),0 3px 11px 4px rgba(0,0,0,0.5);border:1px solid #f4f6f7;"></div>
<div class="b" style="left:0px;top:678px;width:1345px;height:29px;background:#e6e6e6;"></div>
<div class="b" style="left:0px;top:678px;width:1345px;height:1px;background:#a6a6a6;"></div>
<div class="b" style="left:0px;top:706px;width:1366px;height:1px;background:#c6c6c6;"></div>
<svg class="b" style="left:26px;top:687px;" width="5" height="9" viewBox="0 0 5 9"><path d="M5 0V9L0 4.5Z" fill="#c3c3c3"/></svg>
<svg class="b" style="left:56px;top:687px;" width="5" height="9" viewBox="0 0 5 9"><path d="M0 0V9L5 4.5Z" fill="#c3c3c3"/></svg>
<div class="b" style="left:100px;top:678px;width:60px;height:23px;background:#fff;"></div>
<div class="b" style="left:100px;top:679px;width:1px;height:22px;background:#b8b8b8;"></div>
<div class="b" style="left:159px;top:679px;width:1px;height:22px;background:#b8b8b8;"></div>
<div class="b" style="left:100px;top:701px;width:60px;height:2px;background:#217346;"></div>
<div class="t " style="left:112.5px;top:681.5px;font-size:13px;line-height:19px;color:#217346;letter-spacing:-0.59px;font-weight:bold;">Лист3</div>
<svg class="b" style="left:192px;top:683px;" width="18" height="18" viewBox="0 0 18 18"><circle cx="9" cy="9" r="7.8" fill="none" stroke="#777" stroke-width="1.2"/><path d="M9 4.8V13.2M4.8 9H13.2" stroke="#777" stroke-width="1.6"/></svg>
<div class="b" style="left:819px;top:687px;width:2px;height:2px;background:#9c9c9c;"></div>
<div class="b" style="left:819px;top:691px;width:2px;height:2px;background:#9c9c9c;"></div>
<div class="b" style="left:819px;top:695px;width:2px;height:2px;background:#9c9c9c;"></div>
<div class="b" style="left:836px;top:685px;width:15px;height:15px;background:#fff;border:1px solid #ababab;box-sizing:border-box;"></div>
<svg class="b" style="left:841px;top:689px;" width="4" height="7" viewBox="0 0 4 7"><path d="M4 0V7L0 3.5Z" fill="#666"/></svg>
<div class="b" style="left:851px;top:685px;width:452px;height:15px;background:#fff;border:1px solid #ababab;box-sizing:border-box;"></div>
<div class="b" style="left:1303px;top:685px;width:27px;height:15px;background:#d3d3d3;"></div>
<div class="b" style="left:1330px;top:685px;width:15px;height:15px;background:#fff;border:1px solid #ababab;box-sizing:border-box;"></div>
<svg class="b" style="left:1336px;top:689px;" width="4" height="7" viewBox="0 0 4 7"><path d="M0 0V7L4 3.5Z" fill="#666"/></svg>
<div class="b" style="left:0px;top:707px;width:1366px;height:21px;background:#f1f1f1;"></div>
<div class="t " style="left:8.5px;top:707.5px;font-size:12px;line-height:18px;color:#555;letter-spacing:-0.26px;">Готово</div>
<div class="b" style="left:1074px;top:707px;width:38px;height:21px;background:#cfcfcf;"></div>
<svg class="b" style="left:1086px;top:710px;" width="13" height="13" viewBox="0 0 13 13"><path d="M0.5 0.5H12.5V12.5H0.5ZM0.5 4.5H12.5M0.5 8.5H12.5M4.5 0.5V12.5M8.5 0.5V12.5" fill="none" stroke="#666" stroke-width="1.1"/></svg>
<svg class="b" style="left:1124px;top:710px;" width="14" height="13" viewBox="0 0 14 13"><rect x="0.5" y="0.5" width="13" height="12" fill="none" stroke="#666"/><rect x="3.5" y="3.5" width="7" height="6.5" fill="none" stroke="#666"/><path d="M5 5.5H9M5 7.5H9" stroke="#666" stroke-width="0.8"/></svg>
<svg class="b" style="left:1162px;top:710px;" width="14" height="13" viewBox="0 0 14 13"><rect x="0.5" y="0.5" width="13" height="12" fill="none" stroke="#666"/><path d="M4.5 0.5V7.5M8.5 0.5V7.5H0.5" fill="none" stroke="#666"/></svg>
<div class="b" style="left:1193px;top:716px;width:6px;height:2px;background:#555;"></div>
<div class="b" style="left:1203px;top:717px;width:100px;height:1px;background:#9a9a9a;"></div>
<div class="b" style="left:1251px;top:711px;width:4px;height:11px;background:#666;"></div>
<div class="b" style="left:1307px;top:716px;width:8px;height:2px;background:#555;"></div>
<div class="b" style="left:1310px;top:713px;width:2px;height:8px;background:#555;"></div>
<div class="t " style="left:1331.0px;top:707.5px;font-size:12px;line-height:18px;color:#555;letter-spacing:-0.92px;">100%</div>
<div class="b" style="left:0px;top:728px;width:1366px;height:40px;background:radial-gradient(ellipse 160px 30px at 560px 30px,rgba(95,80,72,0.45),rgba(0,0,0,0) 100%),radial-gradient(ellipse 120px 30px at 760px 8px,rgba(90,78,70,0.35),rgba(0,0,0,0) 100%),radial-gradient(ellipse 90px 26px at 450px 14px,rgba(110,98,90,0.4),rgba(0,0,0,0) 100%),radial-gradient(ellipse 70px 24px at 650px 26px,rgba(105,92,84,0.3),rgba(0,0,0,0) 100%),linear-gradient(90deg,#0f0f0f 0,#0e0e0e 285px,#2d2623 318px,#40362f 390px,#483d37 520px,#43382f 700px,#3b302c 900px,#2f2522 1040px,#110e0d 1078px,#0b0b0b 1110px,#0b0b0b 1366px);"></div>
<div class="b" style="left:0px;top:728px;width:1366px;height:1px;background:#4a4a4a;"></div>
<div class="b" style="left:0px;top:729px;width:1366px;height:1px;background:#151515;"></div>
<div class="b" style="left:1px;top:731px;width:13px;height:36px;background:linear-gradient(#4a4a4a,#1c1c1c 45%,#0c0c0c);border:1px solid #5a5a5a;border-left:0;box-sizing:border-box;"></div>
<div class="t " style="left:44.0px;top:731.5px;font-size:12px;line-height:18px;color:#fff;letter-spacing:0.39px;">09:43</div>
<div class="t " style="left:27.0px;top:748.5px;font-size:12px;line-height:18px;color:#fff;letter-spacing:0.68px;">26/11/2016</div>
<svg class="b" style="left:113px;top:743px;" width="15" height="11" viewBox="0 0 15 11"><rect x="0" y="8.5" width="2" height="2.5" fill="#fff"/><rect x="3" y="6.5" width="2" height="4.5" fill="#fff"/><rect x="6" y="4.5" width="2" height="6.5" fill="#fff"/><rect x="9" y="2.3" width="2" height="8.7" fill="#fff"/><rect x="12" y="0" width="2.2" height="11" fill="#fff"/></svg>
<svg class="b" style="left:138px;top:741.5px;" width="13" height="15" viewBox="0 0 13 15"><path d="M0.5 5.2H3L7 0.8V14.2L3 9.8H0.5Z" fill="#fff"/><path d="M9.3 4.2C11.2 6 11.2 9 9.3 10.8" fill="none" stroke="#e4e4e4" stroke-width="1.2"/></svg>
<svg class="b" style="left:164.7px;top:747px;" width="8" height="4" viewBox="0 0 8 4"><path d="M0 4L4 0L8 4Z" fill="#fff"/></svg>
<div class="t " style="left:188.5px;top:737.0px;font-size:12px;line-height:18px;color:#fff;letter-spacing:0.00px;transform:scaleX(0.82);transform-origin:0 50%;">EN</div>
<div class="t " style="left:214.0px;top:727.0px;font-size:13px;line-height:19px;color:#fff;letter-spacing:0.77px;font-weight:bold;">«</div>
<div class="t " style="left:230.0px;top:739.0px;font-size:12px;line-height:18px;color:#fff;letter-spacing:0.78px;">שולחן העבודה</div>
<svg class="b" style="left:324px;top:731px;" width="35" height="31" viewBox="0 0 35 31"><rect x="2.5" y="11.5" width="30" height="18" fill="#f1e9a6" stroke="#9aa4b4" stroke-width="1.4"/><rect x="3.2" y="12.2" width="28.6" height="3" fill="#b9c3d6"/><path d="M6 24.5H30" stroke="#b9ae62" stroke-width="1"/><path d="M22 22L24 17L26.5 21.5" fill="none" stroke="#c08080" stroke-width="1"/><path d="M2.5 2.5L17 21.5" stroke="#111" stroke-width="2.6"/><path d="M3 3L9 11" stroke="#889" stroke-width="1"/><path d="M15.5 19.5L18.5 23.5" stroke="#000" stroke-width="1.6"/></svg>
<svg class="b" style="left:829px;top:732px;" width="29" height="29" viewBox="0 0 29 29"><rect x="1.2" y="1.2" width="26.6" height="26.6" fill="#2b0a07" stroke="#c9251c" stroke-width="2.4"/><path d="M6 21.5C7 18.5 11 16.5 14 15.5C17.5 14.3 21 14.6 21.5 16C22 17.3 18.5 17 16 15C13.5 13 11.8 9 12.3 6.5C12.6 5 14.2 5.2 14.2 7C14.2 10.5 11.5 17.5 8.5 20.8C7 22.4 5.5 22.8 6 21.5Z" fill="none" stroke="#f1e9e6" stroke-width="1.3"/></svg>
<svg class="b" style="left:890px;top:732px;" width="31" height="31" viewBox="0 0 31 31"><rect x="16" y="4" width="14" height="23" fill="#fff" stroke="#2b579a" stroke-width="1"/><rect x="19.5" y="7" width="8.5" height="1.5" fill="#2b579a"/><rect x="19.5" y="10" width="8.5" height="1.5" fill="#2b579a"/><rect x="19.5" y="13" width="8.5" height="1.5" fill="#2b579a"/><rect x="19.5" y="16" width="8.5" height="1.5" fill="#2b579a"/><rect x="19.5" y="19" width="8.5" height="1.5" fill="#2b579a"/><rect x="19.5" y="22" width="8.5" height="1.5" fill="#2b579a"/><path d="M0 4L18 0.5V30.5L0 27Z" fill="#2b579a"/><text x="9" y="21" text-anchor="middle" font-size="14" font-weight="bold" fill="#fff" font-family="Liberation Sans,sans-serif">W</text></svg>
<svg class="b" style="left:952px;top:732px;" width="31" height="31" viewBox="0 0 31 31"><rect x="16" y="4" width="14" height="23" fill="#fff" stroke="#d24726" stroke-width="1"/><circle cx="23.5" cy="10.5" r="3.6" fill="#d24726"/><path d="M23.5 10.5V6.2A4.3 4.3 0 0 1 27.8 10.5Z" fill="#fff"/><rect x="20" y="17" width="8" height="1.6" fill="#d24726"/><rect x="20" y="20.5" width="8" height="1.6" fill="#d24726"/><path d="M0 4L18 0.5V30.5L0 27Z" fill="#d24726"/><text x="9" y="21" text-anchor="middle" font-size="14" font-weight="bold" fill="#fff" font-family="Liberation Sans,sans-serif">P</text></svg>
<svg class="b" style="left:1014px;top:732px;" width="31" height="31" viewBox="0 0 31 31"><rect x="17" y="9" width="13" height="14" fill="#fff" stroke="#0072c6" stroke-width="1.2"/><path d="M17.5 10L23.5 16L29.5 10" fill="none" stroke="#0072c6" stroke-width="1.6"/><path d="M0 4L18 0.5V30.5L0 27Z" fill="#0072c6"/><ellipse cx="9" cy="15.8" rx="3.6" ry="4.6" fill="none" stroke="#fff" stroke-width="2.3"/></svg>
<svg class="b" style="left:1076px;top:732px;" width="31" height="31" viewBox="0 0 31 31"><rect x="16" y="4" width="14" height="23" fill="#fff" stroke="#80397b" stroke-width="1"/><rect x="19" y="7" width="8" height="1.5" fill="#80397b"/><rect x="19" y="10.5" width="8" height="1.5" fill="#80397b"/><rect x="19" y="14" width="8" height="1.5" fill="#80397b"/><rect x="19" y="17.5" width="8" height="1.5" fill="#80397b"/><rect x="19" y="21" width="8" height="1.5" fill="#80397b"/><rect x="28" y="6" width="2.5" height="4" fill="#80397b"/><rect x="28" y="12" width="2.5" height="4" fill="#80397b"/><rect x="28" y="18" width="2.5" height="4" fill="#80397b"/><path d="M0 4L18 0.5V30.5L0 27Z" fill="#80397b"/><text x="9" y="21" text-anchor="middle" font-size="14" font-weight="bold" fill="#fff" font-family="Liberation Sans,sans-serif">N</text></svg>
<div class="b" style="left:1124px;top:729px;width:58px;height:38px;border-radius:3px;border:1px solid #e4e4e4;box-sizing:border-box;background:radial-gradient(ellipse 30px 14px at 50% 100%,rgba(200,200,200,0.55),rgba(200,200,200,0) 100%),linear-gradient(180deg,#c9c9c9 0,#a2a2a2 22%,#7e7e7e 50%,#868686 75%,#9c9c9c 100%);"></div>
<svg class="b" style="left:1138px;top:732px;" width="31" height="31" viewBox="0 0 31 31"><rect x="16" y="4" width="14" height="23" fill="#fff" stroke="#217346" stroke-width="1"/><rect x="19" y="6.5" width="9.5" height="2.2" fill="#217346"/><rect x="19" y="10.2" width="9.5" height="2.2" fill="#217346"/><rect x="19" y="13.9" width="9.5" height="2.2" fill="#217346"/><rect x="19" y="17.6" width="9.5" height="2.2" fill="#217346"/><rect x="19" y="21.3" width="9.5" height="2.2" fill="#217346"/><rect x="23" y="5" width="1.2" height="21" fill="#fff"/><path d="M0 4L18 0.5V30.5L0 27Z" fill="#217346"/><text x="9" y="21" text-anchor="middle" font-size="14" font-weight="bold" fill="#fff" font-family="Liberation Sans,sans-serif">X</text></svg>
<div class="b" style="left:1186px;top:729px;width:58px;height:38px;border-radius:3px;border:1px solid #8a8a8a;box-sizing:border-box;background:linear-gradient(135deg,#626262 0,#474747 35%,#262626 55%,#2e2e2e 70%,#3c3c3c 100%);"></div>
<svg class="b" style="left:1199px;top:732px;" width="32" height="33" viewBox="0 0 32 33"><circle cx="11" cy="11" r="9" fill="#00aff0"/><circle cx="21" cy="22" r="9" fill="#00aff0"/><circle cx="16" cy="16.5" r="12.5" fill="#00aff0"/><text x="16" y="25" text-anchor="middle" font-size="25" font-weight="bold" fill="#fff" font-family="Liberation Sans,sans-serif">S</text></svg>
<div class="b" style="left:1248px;top:729px;width:58px;height:38px;border-radius:3px;border:1px solid #8a8a8a;box-sizing:border-box;background:linear-gradient(135deg,#626262 0,#474747 35%,#262626 55%,#2e2e2e 70%,#3c3c3c 100%);"></div>
<svg class="b" style="left:1261px;top:733px;" width="32" height="32" viewBox="0 0 32 32"><circle cx="16" cy="16" r="15" fill="#db4437"/><path d="M16 16L3 8.5A15 15 0 0 0 8.5 29Z" fill="#0f9d58"/><path d="M16 16L8.5 29A15 15 0 0 0 29 8.5L16 8.5Z" fill="#ffcd40"/><path d="M16 16L3 8.5A15 15 0 0 1 29 8.5H16Z" fill="#db4437"/><path d="M16 16L9.7 19.6L3 8.5Z" fill="#0f9d58"/><circle cx="16" cy="16" r="7.2" fill="#fff"/><circle cx="16" cy="16" r="5.8" fill="#4285f4"/></svg>
<svg class="b" style="left:1319px;top:729px;" width="40" height="40" viewBox="0 0 40 40"><defs><radialGradient id="orb" cx="50%" cy="30%" r="70%"><stop offset="0" stop-color="#8fd0f2"/><stop offset="0.5" stop-color="#2f7cc0"/><stop offset="1" stop-color="#0f3158"/></radialGradient><linearGradient id="orb2" x1="0" y1="0" x2="0" y2="1"><stop offset="0" stop-color="#fff" stop-opacity="0.55"/><stop offset="1" stop-color="#fff" stop-opacity="0.05"/></linearGradient></defs><circle cx="20" cy="20" r="18.6" fill="url(#orb)" stroke="#a9cbe2" stroke-width="1.1"/><path d="M3.5 17A16.8 16.8 0 0 1 36.5 17C30 21.5 10 21.5 3.5 17Z" fill="url(#orb2)"/><g transform="translate(21 19.3) scale(1.08 1.25) translate(-18 -20.8)"><path d="M11 13.5C13.5 12 16 12 18.5 13.5L17 19.5C14.5 18.2 12 18.2 9.5 19.5Z" fill="#f2672a"/><path d="M20.5 14.5C23 16 25.5 16 28.5 14.2L27 20.2C24.5 21.8 21.5 21.8 19 20.5Z" fill="#8cc63f"/><path d="M9 21.2C11.5 20 14 20 16.5 21.4L15 27.4C12.5 26 10 26 7.5 27.3Z" fill="#35a3e0"/><path d="M18.5 22.3C21 23.7 24 23.7 26.5 22L25 28C22.5 29.6 19.5 29.6 17 28.3Z" fill="#fdc82f"/></g></svg>
</body></html>
